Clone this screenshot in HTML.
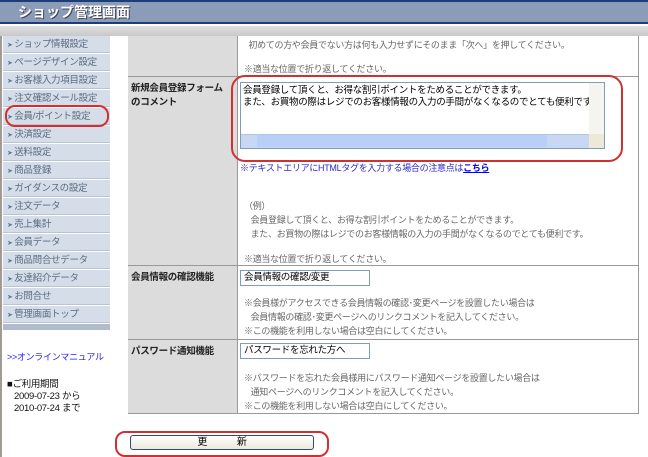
<!DOCTYPE html>
<html><head><meta charset="utf-8"><style>
*{margin:0;padding:0;box-sizing:border-box}
body{width:648px;height:457px;overflow:hidden;background:#fff;font-family:"Liberation Sans","Noto Sans CJK JP",sans-serif;font-size:9px;letter-spacing:-0.3px;color:#333;position:relative}
.a{position:absolute;white-space:nowrap}
.side div{position:absolute;left:3px;width:107px;height:17px;background:#d5dee8;border-bottom:1px solid #b8c4d2;color:#5a6a80;font-size:9.5px;line-height:17px;padding-left:4px;white-space:nowrap;overflow:hidden}
.side div:before{content:"➤ ";color:#5a7aa0;font-size:7px}
.lbl{position:absolute;left:128px;width:110px;background:#dcdcdc;border-right:1px solid #999;border-bottom:1px solid #999;font-weight:bold;color:#222;padding:5px 3px;line-height:14px;font-size:9.5px;white-space:nowrap}
.val{position:absolute;left:238px;width:400px;background:#fff;border-bottom:1px solid #999;color:#666;overflow:hidden}
.n{position:absolute;left:6px;white-space:nowrap;line-height:14px}
.oval{position:absolute;border:2px solid #d03030;border-radius:10px}
</style></head><body>
<div class="a" style="left:0;top:0;width:648px;height:2px;background:#1e3c78"></div>
<div class="a" style="left:0;top:2px;width:648px;height:20px;background:#8a9cb8;color:#fff;font-size:14px;font-weight:bold;line-height:20px;padding-left:18px;letter-spacing:0;text-shadow:1px 1px 0 #445">ショップ管理画面</div>
<div class="a" style="left:0;top:22px;width:648px;height:2px;background:#1e3c78"></div>
<div class="a" style="left:0;top:26px;width:648px;height:10px;background:linear-gradient(#e0e0e0,#c8c8c8)"></div>
<div class="a" style="left:0;top:36px;width:2px;height:421px;background:#a09c94"></div>
<div class="a" style="left:638px;top:36px;width:1px;height:378px;background:#999"></div>
<div class="a" style="left:128px;top:36px;width:1px;height:378px;background:#999"></div>
<div class="side">
<div style="top:36px">ショップ情報設定</div>
<div style="top:54px">ページデザイン設定</div>
<div style="top:72px">お客様入力項目設定</div>
<div style="top:90px">注文確認メール設定</div>
<div style="top:108px">会員/ポイント設定</div>
<div style="top:126px">決済設定</div>
<div style="top:144px">送料設定</div>
<div style="top:162px">商品登録</div>
<div style="top:180px">ガイダンスの設定</div>
<div style="top:198px">注文データ</div>
<div style="top:216px">売上集計</div>
<div style="top:234px">会員データ</div>
<div style="top:252px">商品問合せデータ</div>
<div style="top:270px">友達紹介データ</div>
<div style="top:288px">お問合せ</div>
<div style="top:306px">管理画面トップ</div>
</div>
<div class="a" style="left:3px;top:324px;width:107px;height:6px;background:#b0bccb"></div>
<div class="oval" style="left:5px;top:105px;width:104px;height:22px"></div>
<div class="a" style="left:7px;top:350px;color:#1a1aff;font-size:9px">&gt;&gt;オンラインマニュアル</div>
<div class="a" style="left:7px;top:379px;color:#111;line-height:12px;font-size:9.5px">■ご利用期間<br>&nbsp;&nbsp;&nbsp;2009-07-23 から<br>&nbsp;&nbsp;&nbsp;2010-07-24 まで</div>

<div class="lbl" style="top:36px;height:41px"></div>
<div class="val" style="top:36px;height:41px"><div class="n" style="top:2px">&nbsp;&nbsp;初めての方や会員でない方は何も入力せずにそのまま「次へ」を押してください。</div><div class="n" style="top:26px">※適当な位置で折り返してください。</div></div>
<div class="lbl" style="top:77px;height:189px">新規会員登録フォーム<br>のコメント</div>
<div class="val" style="top:77px;height:189px">
<div class="a" style="left:2px;top:5px;width:365px;height:67px;border:1px solid #7f9db9;background:#fff;overflow:hidden">
<div style="padding:2px 2px;color:#000;line-height:12px;font-size:9.5px">会員登録して頂くと、お得な割引ポイントをためることができます。<br>また、お買物の際はレジでのお客様情報の入力の手間がなくなるのでとても便利です。</div>
<div class="a" style="right:0;top:0;width:15px;height:51px;background:#f4f4f0"></div>
<div class="a" style="left:0;bottom:0;width:350px;height:14px;background:#c8d8f4;border-top:1px solid #b0c4e0"></div>
<div class="a" style="left:16px;bottom:1px;width:290px;height:12px;background:#b8d0f8;border-radius:2px"></div>
<div class="a" style="right:0;bottom:0;width:15px;height:14px;background:#ece9d8"></div>
</div>
<div class="n" style="left:2px;top:84px;color:#2a2ad0">※テキストエリアにHTMLタグを入力する場合の注意点は<u style="color:#00f;font-weight:bold">こちら</u></div>
<div class="n" style="top:122px">（例）<br>&nbsp;&nbsp;&nbsp;会員登録して頂くと、お得な割引ポイントをためることができます。<br>&nbsp;&nbsp;&nbsp;また、お買物の際はレジでのお客様情報の入力の手間がなくなるのでとても便利です。</div>
<div class="n" style="top:175px">※適当な位置で折り返してください。</div>
</div>
<div class="oval" style="left:231px;top:75px;width:392px;height:87px;border-radius:14px"></div>
<div class="lbl" style="top:266px;height:74px">会員情報の確認機能</div>
<div class="val" style="top:266px;height:74px">
<div class="a" style="left:2px;top:4px;width:130px;height:16px;border:1px solid #7f9db9;color:#000;padding-left:3px;line-height:14px;font-size:9.5px">会員情報の確認/変更</div>
<div class="n" style="top:30px">※会員様がアクセスできる会員情報の確認･変更ページを設置したい場合は<br>&nbsp;&nbsp;&nbsp;会員情報の確認･変更ページへのリンクコメントを記入してください。<br>※この機能を利用しない場合は空白にしてください。</div>
</div>
<div class="lbl" style="top:340px;height:74px">パスワード通知機能</div>
<div class="val" style="top:340px;height:74px">
<div class="a" style="left:2px;top:3px;width:130px;height:16px;border:1px solid #7f9db9;color:#000;padding-left:3px;line-height:14px;font-size:9.5px">パスワードを忘れた方へ</div>
<div class="n" style="top:31px">※パスワードを忘れた会員様用にパスワード通知ページを設置したい場合は<br>&nbsp;&nbsp;&nbsp;通知ページへのリンクコメントを記入してください。<br>※この機能を利用しない場合は空白にしてください。</div>
</div>
<div class="a" style="left:130px;top:435px;width:184px;height:15px;border:1px solid #2a4a80;border-radius:3px;background:linear-gradient(#fff,#ece9d8);color:#000;text-align:center;line-height:13px;font-size:10px">更&nbsp;&nbsp;&nbsp;&nbsp;&nbsp;&nbsp;&nbsp;&nbsp;&nbsp;&nbsp;&nbsp;&nbsp;新</div>
<div class="oval" style="left:115px;top:431px;width:214px;height:26px"></div>
</body></html>
